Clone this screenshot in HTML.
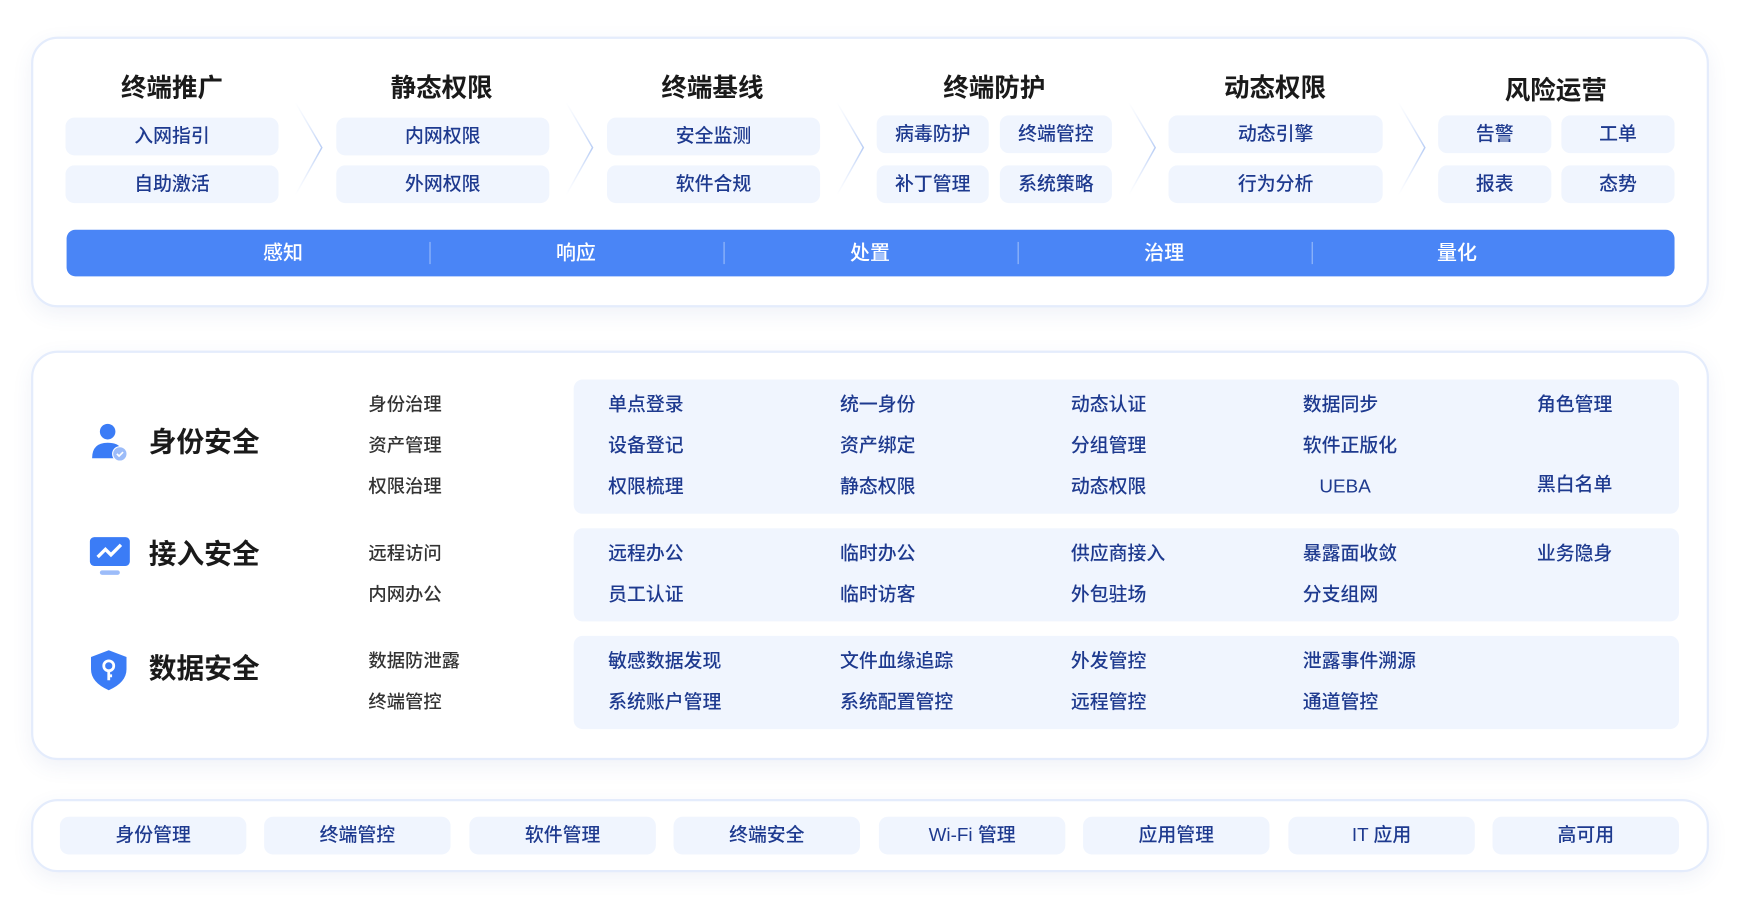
<!DOCTYPE html>
<html><head><meta charset="utf-8"><style>
*{margin:0;padding:0;box-sizing:border-box}
html,body{width:1740px;height:914px;overflow:hidden;background:#fff}
body{font-family:"Liberation Sans","Noto Sans CJK SC",sans-serif}
#w{position:absolute;left:0;top:0;width:1568px;height:824px;transform:scale(1.1097);transform-origin:0 0}
.a{position:absolute}
.panel{position:absolute;left:28px;width:1512px;background:#fff;border:2px solid #e4ecfc;border-radius:24px;box-shadow:0 6px 18px rgba(60,90,160,0.08)}
.h{position:absolute;width:200px;text-align:center;font-size:23px;font-weight:bold;color:#1a1a1a;line-height:30px}
.p{position:absolute;height:34px;line-height:34px;text-align:center;background:#f0f5fe;border-radius:8px;color:#1e3a8f;font-size:17px;font-weight:500}
.bar{position:absolute;left:60px;top:207px;width:1449px;height:42px;background:#4a85f6;border-radius:8px}
.bl{position:absolute;top:0;width:120px;margin-left:-60px;text-align:center;color:#fff;font-size:18px;line-height:42px;font-weight:500}
.dv{position:absolute;top:11px;height:20px;border-left:1.5px solid rgba(255,255,255,.45)}
.blk{position:absolute;left:517px;width:996px;background:#f0f5fe;border-radius:8px}
.t{position:absolute;font-size:17px;color:#1e3a8f;line-height:20px;font-weight:500}
.s{position:absolute;left:332px;font-size:16.5px;color:#333;line-height:20px;font-weight:500}
.big{position:absolute;left:134px;font-size:25px;font-weight:bold;color:#1a1a1a;line-height:30px}
</style></head><body><div id="w">
<div class="panel" style="top:33px;height:244px"></div>
<div class="h" style="left:55px;top:64px">终端推广</div>
<div class="h" style="left:298px;top:64px">静态权限</div>
<div class="h" style="left:542px;top:64px">终端基线</div>
<div class="h" style="left:796px;top:64px">终端防护</div>
<div class="h" style="left:1049px;top:64px">动态权限</div>
<div class="h" style="left:1302px;top:66px">风险运营</div>
<svg class="a" style="left:0;top:0" width="1568" height="200">
<defs><linearGradient id="g" x1="0" y1="0" x2="0" y2="1"><stop offset="0" stop-color="#dbe6fb" stop-opacity="0"/><stop offset=".5" stop-color="#b8cdf5"/><stop offset="1" stop-color="#dbe6fb" stop-opacity="0"/></linearGradient></defs>
<g fill="none" stroke="url(#g)" stroke-width="1.3">
<path d="M266 92 L290 133 L266 176"/><path d="M510 92 L534 133 L510 176"/><path d="M754 92 L778 133 L754 176"/><path d="M1017 92 L1041 133 L1017 176"/><path d="M1260 92 L1284 133 L1260 176"/>
</g></svg>
<div class="p" style="left:59px;top:106px;width:192px">入网指引</div>
<div class="p" style="left:59px;top:149px;width:192px">自助激活</div>
<div class="p" style="left:303px;top:106px;width:192px">内网权限</div>
<div class="p" style="left:303px;top:149px;width:192px">外网权限</div>
<div class="p" style="left:547px;top:106px;width:192px">安全监测</div>
<div class="p" style="left:547px;top:149px;width:192px">软件合规</div>
<div class="p" style="left:790px;top:104px;width:101px">病毒防护</div>
<div class="p" style="left:901px;top:104px;width:101px">终端管控</div>
<div class="p" style="left:790px;top:149px;width:101px">补丁管理</div>
<div class="p" style="left:901px;top:149px;width:101px">系统策略</div>
<div class="p" style="left:1053px;top:104px;width:193px">动态引擎</div>
<div class="p" style="left:1053px;top:149px;width:193px">行为分析</div>
<div class="p" style="left:1296px;top:104px;width:102px">告警</div>
<div class="p" style="left:1407px;top:104px;width:102px">工单</div>
<div class="p" style="left:1296px;top:149px;width:102px">报表</div>
<div class="p" style="left:1407px;top:149px;width:102px">态势</div>
<div class="bar">
<div class="bl" style="left:195px">感知</div><div class="bl" style="left:459px">响应</div><div class="bl" style="left:724px">处置</div><div class="bl" style="left:989px">治理</div><div class="bl" style="left:1253px">量化</div>
<div class="dv" style="left:327px"></div><div class="dv" style="left:592px"></div><div class="dv" style="left:857px"></div><div class="dv" style="left:1122px"></div>
</div>

<div class="panel" style="top:316px;height:369px"></div>
<div class="blk" style="top:342px;height:121px"></div>
<div class="blk" style="top:476px;height:84px"></div>
<div class="blk" style="top:573px;height:84px"></div>
<svg class="a" style="left:80px;top:380px" width="40" height="40"><circle cx="17" cy="9" r="7" fill="#3b7cf6"/><path d="M3 33 Q3 19 17 19 Q26 19 29 24 L29 33 Z" fill="#3b7cf6"/><circle cx="28" cy="29" r="6.5" fill="#9cbcf9" stroke="#fff" stroke-width="1"/><path d="M25.3 29 l2 2 l3.6-3.6" stroke="#fff" stroke-width="1.5" fill="none"/></svg>
<svg class="a" style="left:80px;top:483px" width="40" height="40"><rect x="1" y="1" width="36" height="26" rx="4" fill="#3b7cf6"/><path d="M8 19 l7-7 l5 5 l9-9" stroke="#fff" stroke-width="3" fill="none"/><rect x="10" y="31" width="18" height="4" rx="2" fill="#9cbcf9"/></svg>
<svg class="a" style="left:80px;top:584px" width="40" height="40"><path d="M18 2 L34 8 L34 19 Q34 31 18 38 Q2 31 2 19 L2 8 Z" fill="#3b7cf6"/><circle cx="18" cy="16" r="4.5" fill="none" stroke="#fff" stroke-width="2.5"/><path d="M18 20 v9 M18 25 h3" stroke="#fff" stroke-width="2.5"/></svg>
<div class="big" style="top:384px">身份安全</div>
<div class="big" style="top:485px">接入安全</div>
<div class="big" style="top:588px">数据安全</div>
<div class="s" style="top:355px">身份治理</div>
<div class="s" style="top:392px">资产管理</div>
<div class="s" style="top:429px">权限治理</div>
<div class="s" style="top:489px">远程访问</div>
<div class="s" style="top:526px">内网办公</div>
<div class="s" style="top:586px">数据防泄露</div>
<div class="s" style="top:623px">终端管控</div>

<div class="t" style="left:548px;top:355px">单点登录</div><div class="t" style="left:757px;top:355px">统一身份</div><div class="t" style="left:965px;top:355px">动态认证</div><div class="t" style="left:1174px;top:355px">数据同步</div><div class="t" style="left:1385px;top:355px">角色管理</div>
<div class="t" style="left:548px;top:392px">设备登记</div><div class="t" style="left:757px;top:392px">资产绑定</div><div class="t" style="left:965px;top:392px">分组管理</div><div class="t" style="left:1174px;top:392px">软件正版化</div>
<div class="t" style="left:548px;top:429px">权限梳理</div><div class="t" style="left:757px;top:429px">静态权限</div><div class="t" style="left:965px;top:429px">动态权限</div><div class="t" style="left:1189px;top:429px">UEBA</div><div class="t" style="left:1385px;top:427px">黑白名单</div>
<div class="t" style="left:548px;top:489px">远程办公</div><div class="t" style="left:757px;top:489px">临时办公</div><div class="t" style="left:965px;top:489px">供应商接入</div><div class="t" style="left:1174px;top:489px">暴露面收敛</div><div class="t" style="left:1385px;top:489px">业务隐身</div>
<div class="t" style="left:548px;top:526px">员工认证</div><div class="t" style="left:757px;top:526px">临时访客</div><div class="t" style="left:965px;top:526px">外包驻场</div><div class="t" style="left:1174px;top:526px">分支组网</div>
<div class="t" style="left:548px;top:586px">敏感数据发现</div><div class="t" style="left:757px;top:586px">文件血缘追踪</div><div class="t" style="left:965px;top:586px">外发管控</div><div class="t" style="left:1174px;top:586px">泄露事件溯源</div>
<div class="t" style="left:548px;top:623px">系统账户管理</div><div class="t" style="left:757px;top:623px">系统配置管控</div><div class="t" style="left:965px;top:623px">远程管控</div><div class="t" style="left:1174px;top:623px">通道管控</div>

<div class="panel" style="top:720px;height:66px"></div>
<div class="p" style="left:54px;top:736px;width:168px">身份管理</div>
<div class="p" style="left:238px;top:736px;width:168px">终端管控</div>
<div class="p" style="left:423px;top:736px;width:168px">软件管理</div>
<div class="p" style="left:607px;top:736px;width:168px">终端安全</div>
<div class="p" style="left:792px;top:736px;width:168px">Wi-Fi 管理</div>
<div class="p" style="left:976px;top:736px;width:168px">应用管理</div>
<div class="p" style="left:1161px;top:736px;width:168px">IT 应用</div>
<div class="p" style="left:1345px;top:736px;width:168px">高可用</div>
</div></body></html>
